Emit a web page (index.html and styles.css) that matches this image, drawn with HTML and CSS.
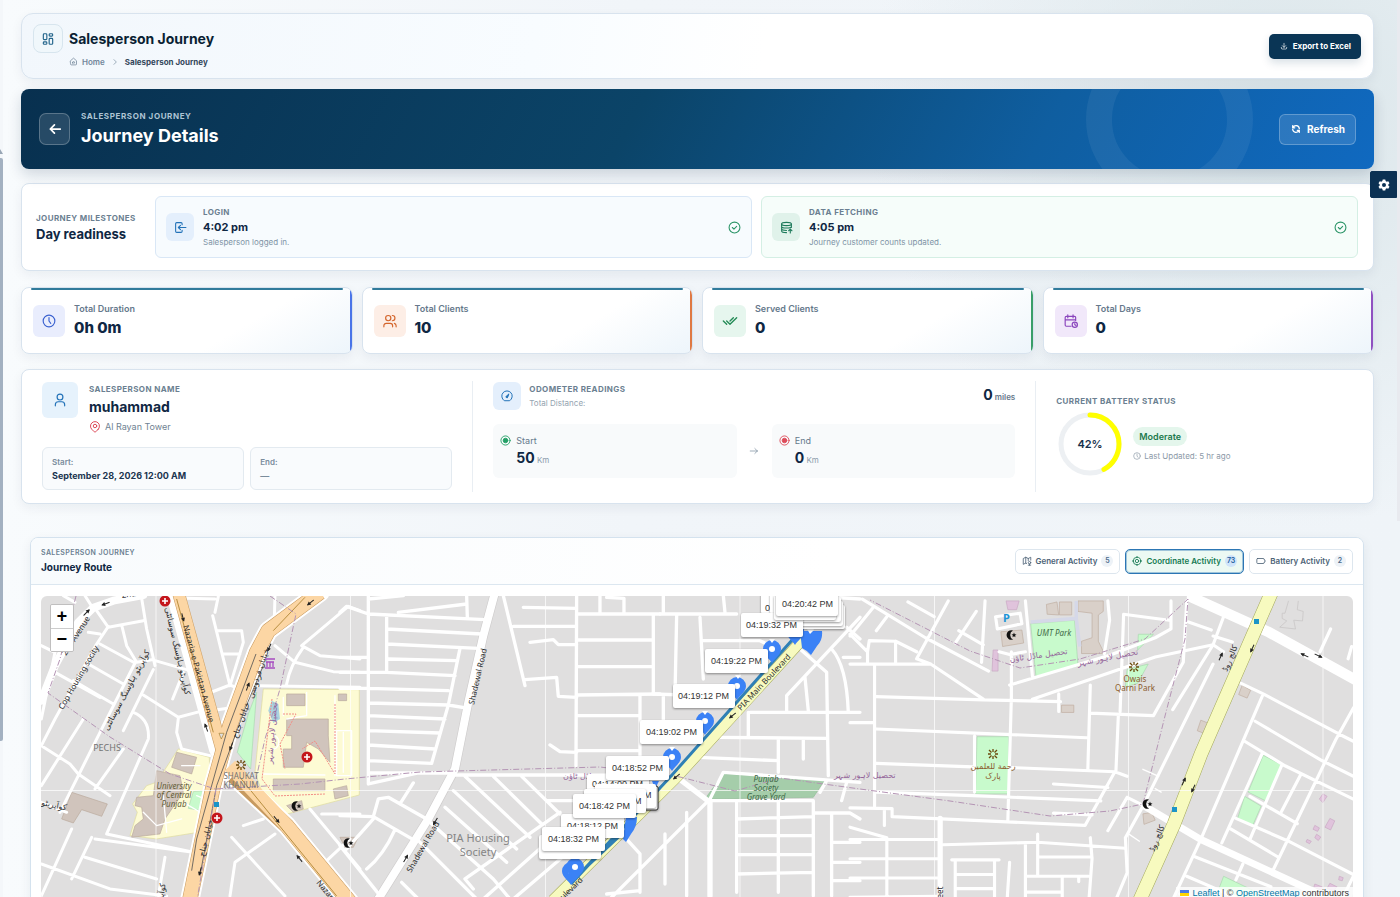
FILE: index.html
```html
<!DOCTYPE html>
<html lang="en">
<head>
<meta charset="utf-8">
<title>Salesperson Journey</title>
<link rel="stylesheet" href="styles.css">
</head>
<body>
<svg class="defs" aria-hidden="true">
  <symbol id="i-dash" viewBox="0 0 24 24"><rect x="4" y="3" width="6" height="10" rx="1.5"/><rect x="4" y="17" width="6" height="4" rx="1.5"/><rect x="14" y="11" width="6" height="10" rx="1.5"/><rect x="14" y="3" width="6" height="4" rx="1.5"/></symbol>
  <symbol id="i-home" viewBox="0 0 24 24"><path d="M4 10l8-7 8 7v9a2 2 0 0 1-2 2H6a2 2 0 0 1-2-2zM9 15a3 3 0 1 1 6 0v1H9z"/></symbol>
  <symbol id="i-chev" viewBox="0 0 24 24"><path d="M9 5l7 7-7 7"/></symbol>
  <symbol id="i-down" viewBox="0 0 24 24"><path d="M4 16v2a3 3 0 0 0 3 3h10a3 3 0 0 0 3-3v-2M7 11l5 5 5-5M12 4v12"/></symbol>
  <symbol id="i-left" viewBox="0 0 24 24"><path d="M4 12h17M4 12l7 7M4 12l7-7"/></symbol>
  <symbol id="i-right" viewBox="0 0 24 24"><path d="M3 12h17M20 12l-6 6M20 12l-6-6"/></symbol>
  <symbol id="i-refresh" viewBox="0 0 24 24"><path d="M20 11A8.1 8.1 0 0 0 4.500 9M4 4v5h5M4 13a8.100 8.100 0 0 0 15.500 2M20 20v-5h-5"/></symbol>
  <symbol id="i-login" viewBox="0 0 24 24"><path d="M15 7V5a2 2 0 0 0-2-2H5a2 2 0 0 0-2 2v14a2 2 0 0 0 2 2h8a2 2 0 0 0 2-2v-2M22 12H8M12 8l-4 4 4 4"/></symbol>
  <symbol id="i-db" viewBox="0 0 24 24"><ellipse cx="12" cy="5.500" rx="9" ry="3"/><path d="M3 5.500v13c0 1.500 4 3 9 3M21 5.500V12M3 10c0 2 4 3 9 3s9-1 9-3M3 14.500c0 2 4 3 9 3M19 22v-7M16 18l3-3 3 3"/></symbol>
  <symbol id="i-check" viewBox="0 0 24 24"><circle cx="12" cy="12" r="10"/><path d="M8 12l3 3 5-5"/></symbol>
  <symbol id="i-clock" viewBox="0 0 24 24"><circle cx="12" cy="12" r="10"/><path d="M12 6v6l3 4"/></symbol>
  <symbol id="i-users" viewBox="0 0 24 24"><circle cx="9" cy="7" r="4.500"/><path d="M1.500 22v-2a4 4 0 0 1 4-4h7a4 4 0 0 1 4 4v2M16 2.500a4.500 4.500 0 0 1 0 9M22.500 22v-2a4.500 4.500 0 0 0-3-4"/></symbol>
  <symbol id="i-checks" viewBox="0 0 24 24"><path d="M7 12l5 5L22 7M2 12l5 5M12 12l5-5"/></symbol>
  <symbol id="i-cal" viewBox="0 0 24 24"><path d="M12 21H4a2 2 0 0 1-2-2V6a2 2 0 0 1 2-2h14a2 2 0 0 1 2 2v5M15.500 1.500v5M6.500 1.500v5M2 10h18"/><circle cx="18.500" cy="18.500" r="4.500"/><path d="M18.500 16.500v2l2 1"/></symbol>
  <symbol id="i-user" viewBox="0 0 24 24"><circle cx="12" cy="7" r="5"/><path d="M4 22v-2a5 5 0 0 1 5-5h6a5 5 0 0 1 5 5v2"/></symbol>
  <symbol id="i-pin" viewBox="0 0 24 24"><circle cx="12" cy="10" r="3.500"/><path d="M18.500 16.500L13.500 21.500a2 2 0 0 1-3 0L5.500 16.500a9 9 0 1 1 13 0z"/></symbol>
  <symbol id="i-gauge" viewBox="0 0 24 24"><path d="M6 21a10.500 10.500 0 1 1 12 0z"/><path d="M15.500 8.500L13.500 14a1.800 1.800 0 1 1-2.500-2z" fill="currentColor"/></symbol>
  <symbol id="i-dot" viewBox="0 0 24 24"><circle cx="12" cy="12" r="10"/><circle cx="12" cy="12" r="5" fill="currentColor"/></symbol>
  <symbol id="i-map" viewBox="0 0 24 24"><path d="M11 18l-2-1-6 3V6l6-3 6 3 6-3v7M9 3v14M15 6v5"/><circle cx="18" cy="16" r="3"/><path d="M18 19v3M15 22h6"/></symbol>
  <symbol id="i-target" viewBox="0 0 24 24"><circle cx="12" cy="12" r="9"/><circle cx="12" cy="12" r="4"/><path d="M12 1v3M12 20v3M1 12h3M20 12h3"/></symbol>
  <symbol id="i-batt" viewBox="0 0 24 24"><path d="M4 6h13a3 3 0 0 1 3 3v.5h1.500v5H20v.5a3 3 0 0 1-3 3H4a2 2 0 0 1-2-2V8a2 2 0 0 1 2-2z"/></symbol>
  <symbol id="i-gear" viewBox="0 0 24 24"><path fill="currentColor" stroke="none" fill-rule="evenodd" d="M9.500 1h5l.8 3.200 2 1.100 3.200-1 2.500 4.300-2.400 2.300v2.200l2.400 2.300-2.500 4.300-3.200-1-2 1.100-.8 3.200h-5l-.8-3.200-2-1.100-3.200 1L1 15.400l2.400-2.300v-2.200L1 8.600l2.500-4.300 3.200 1 2-1.100zM12 8a4 4 0 1 0 0 8 4 4 0 0 0 0-8z"/></symbol>
  <symbol id="m-pin" viewBox="-10 -24 20 26" overflow="visible"><path fill="#3b82f6" d="M0 0C-2-4-9-8-9-14a9 9 0 1 1 18 0C9-8 2-4 0 0z"/><circle cy="-14" r="3" fill="#fff"/></symbol>
  <symbol id="m-med" viewBox="-6 -6 12 12"><circle r="5.500" fill="#c4161c"/><path d="M-3 0h6M0-3v6" stroke="#fff" stroke-width="1.600"/></symbol>
  <symbol id="m-moon" viewBox="-6 -6 12 12"><path fill="#111" d="M2-4.500a4.800 4.800 0 1 0 0 9 5 5 0 0 1 0-9z"/><path fill="#111" d="M3-2.500l.7 1.700 1.800.2-1.400 1.100.4 1.800L3 1.300 1.500 2.300l.4-1.800L.5-.6l1.800-.2z"/></symbol>
  <symbol id="m-park" viewBox="-6 -6 12 12"><path d="M0-5v3M0 5V2M-5-.0h3M5 0H2M-4-4l2.500 2.500M4-4L1.500-1.500M-4 4l2.500-2.500M4 4L1.500 1.500" stroke="#6b4a0c" stroke-width="1.300" fill="none"/></symbol>
  <symbol id="m-arrow" viewBox="-5 -3 10 6"><path d="M-5 0H3" stroke="#222" stroke-width="1"/><path d="M4 0L0-2v4z" fill="#222"/></symbol>
</svg>

<div class="side-scroll"><i class="up"></i><i class="thumb"></i></div>
<main class="page">
  <header class="card top">
    <span class="tile tile-top"><svg class="ic s14"><use href="#i-dash"/></svg></span>
    <div class="top-text">
      <h1>Salesperson Journey</h1>
      <nav class="crumbs"><a href="#"><svg class="ic s9"><use href="#i-home"/></svg>Home</a><svg class="ic s8"><use href="#i-chev"/></svg><span>Salesperson Journey</span></nav>
    </div>
    <button class="export" type="button"><svg class="ic s8"><use href="#i-down"/></svg>Export to Excel</button>
  </header>

  <section class="hero">
    <button class="back" type="button" aria-label="Back"><svg class="ic s14"><use href="#i-left"/></svg></button>
    <div class="hero-text"><p>SALESPERSON JOURNEY</p><h2>Journey Details</h2></div>
    <button class="refresh" type="button"><svg class="ic s10"><use href="#i-refresh"/></svg>Refresh</button>
  </section>

  <section class="card miles">
    <div class="miles-head"><p class="eyebrow">JOURNEY MILESTONES</p><h3>Day readiness</h3></div>
    <article class="mile blue">
      <span class="tile t28"><svg class="ic s13"><use href="#i-login"/></svg></span>
      <div><p class="eyebrow">LOGIN</p><strong>4:02 pm</strong><small>Salesperson logged in.</small></div>
      <svg class="ic s13 ok"><use href="#i-check"/></svg>
    </article>
    <article class="mile green">
      <span class="tile t28"><svg class="ic s13"><use href="#i-db"/></svg></span>
      <div><p class="eyebrow">DATA FETCHING</p><strong>4:05 pm</strong><small>Journey customer counts updated.</small></div>
      <svg class="ic s13 ok"><use href="#i-check"/></svg>
    </article>
  </section>

  <section class="stats">
    <article class="card stat indigo"><span class="tile t32"><svg class="ic s14"><use href="#i-clock"/></svg></span><div><p>Total Duration</p><strong>0h 0m</strong></div></article>
    <article class="card stat orange"><span class="tile t32"><svg class="ic s14"><use href="#i-users"/></svg></span><div><p>Total Clients</p><strong>10</strong></div></article>
    <article class="card stat emerald"><span class="tile t32"><svg class="ic s16"><use href="#i-checks"/></svg></span><div><p>Served Clients</p><strong>0</strong></div></article>
    <article class="card stat purple"><span class="tile t32"><svg class="ic s14"><use href="#i-cal"/></svg></span><div><p>Total Days</p><strong>0</strong></div></article>
  </section>

  <section class="card info">
    <div class="col person">
      <div class="who">
        <span class="tile t36"><svg class="ic s14"><use href="#i-user"/></svg></span>
        <div><p class="eyebrow">SALESPERSON NAME</p><h3>muhammad</h3><p class="place"><svg class="ic s12"><use href="#i-pin"/></svg>Al Rayan Tower</p></div>
      </div>
      <div class="dates">
        <div><span>Start:</span><strong>September 28, 2026 12:00 AM</strong></div>
        <div><span>End:</span><strong class="none">—</strong></div>
      </div>
    </div>
    <div class="col odo">
      <div class="odo-head">
        <span class="tile t28 blue-tile"><svg class="ic s12"><use href="#i-gauge"/></svg></span>
        <div><p class="eyebrow">ODOMETER READINGS</p><small>Total Distance:</small></div>
        <p class="dist"><b>0</b> miles</p>
      </div>
      <div class="reads">
        <div class="read"><svg class="ic s11 go"><use href="#i-dot"/></svg><div><span>Start</span><p><b>50</b> Km</p></div></div>
        <svg class="ic s10 to"><use href="#i-right"/></svg>
        <div class="read"><svg class="ic s11 stop"><use href="#i-dot"/></svg><div><span>End</span><p><b>0</b> Km</p></div></div>
      </div>
    </div>
    <div class="col batt">
      <p class="eyebrow">CURRENT BATTERY STATUS</p>
      <div class="batt-row">
        <svg class="ring" viewBox="0 0 68 68" role="img" aria-label="42%"><circle cx="34" cy="34" r="29" fill="none" stroke="#edf0f3" stroke-width="5"/><circle cx="34" cy="34" r="29" fill="none" stroke="#ffff00" stroke-width="5" stroke-linecap="round" pathLength="100" stroke-dasharray="42 100" transform="rotate(-90 34 34)"/><text x="34" y="38" text-anchor="middle">42%</text></svg>
        <div><span class="pill">Moderate</span><p class="upd"><svg class="ic s8"><use href="#i-clock"/></svg>Last Updated: 5 hr ago</p></div>
      </div>
    </div>
  </section>

  <section class="route">
    <div class="route-head">
      <div><p class="eyebrow">SALESPERSON JOURNEY</p><h3>Journey Route</h3></div>
      <div class="tabs">
        <button type="button"><svg class="ic s10"><use href="#i-map"/></svg>General Activity<i>5</i></button>
        <button type="button" class="on"><svg class="ic s10"><use href="#i-target"/></svg>Coordinate Activity<i>73</i></button>
        <button type="button"><svg class="ic s10"><use href="#i-batt"/></svg>Battery Activity<i>2</i></button>
      </div>
    </div>
    <div class="map">
      <svg class="map-art" viewBox="41 597 1312 304" preserveAspectRatio="xMidYMid slice">
        <rect x="41" y="597" width="1312" height="304" fill="#e0dfdf"/>
        <!-- landuse -->
        <g stroke-width="2">
          <path transform="translate(0 520) scale(.3333)" fill="#fdfbd4" stroke="#e0dc9c" d="M790 510L1078 512V828L850 888L790 830L765 760zM535 690L628 715L632 850L595 940L470 960L390 950L412 880L398 855L440 800L470 790z"/>
          <path transform="translate(0 520) scale(.3333)" fill="#c8facc" stroke="#aad8b0" d="M770 520L752 750L712 700L745 585zM580 818L615 815L605 875L565 868z"/>
          <path transform="translate(0 520) scale(.3333)" fill="#d0c4bc" stroke="#b9a99c" d="M215 820L322 855L305 892L245 872L220 912L185 900zM530 700L590 715L575 765L515 745zM470 755L540 770L550 820L495 900L480 945L395 955L405 920L430 900L425 865L405 860L410 835L460 830zM860 600L985 600V650L990 730L955 690L920 670L910 745H850V690H875V650H860zM860 525H915V560H860zM820 780H975V815H820zM1015 525H1040V545H1015zM1040 800L1000 810L1005 840L1045 830zM860 860L905 845L910 870L880 880zM1020 955L1075 955L1060 985L1035 985z"/>
          <path transform="translate(0 520) scale(.3333)" fill="#aad3df" d="M815 545L835 555L840 600L820 612L805 575z"/>
          <path transform="translate(530 590) scale(.3333)" fill="#a5cdaa" stroke="#8fbd96" d="M580 555L885 572L850 625L525 630z"/>
          <g transform="translate(850 530) scale(.3508)">
            <path fill="#c8facc" stroke="#aad8b0" d="M515 270L640 260L650 390L530 420zM362 592H452V755H358zM1178 645L1230 672L1185 775L1135 750zM1125 762L1172 790L1148 845L1105 825zM1065 990L1180 1045L1170 1075L1050 1030zM822 300H865L820 345zM790 400L850 385L820 440L785 450z"/>
            <path fill="#d9d0c9" stroke="#c0afa2" d="M650 205L722 205V235L708 245V320L725 355H660V320L690 310V240L650 235zM560 215L590 208L595 245L562 243zM597 208H632V245H597zM430 293L490 288L495 325L435 335zM603 502H638V523H603zM1118 445L1142 460L1132 482L1108 472zM1000 545L1025 555L1015 585L990 575zM835 812L860 808L870 830L838 842z"/>
            <path fill="#e0c3dc" stroke="#caa9c4" d="M445 205H482L475 230H450zM408 345H422V405H405zM1348 755L1360 762L1348 780L1338 770zM1368 825L1382 832L1370 858L1354 850zM1325 845L1338 852L1333 862L1320 856zM1330 870L1342 878L1335 888L1325 880zM1303 885L1315 890L1310 897L1300 892zM1325 1012L1350 1022L1345 1030L1322 1022zM1368 1010L1388 1020L1378 1032L1360 1024zM1395 990L1406 994L1403 1003L1393 1000z"/>
            <path fill="none" stroke="#d5d8e8" stroke-width="10" d="M515 265L645 255L655 335M645 205V260"/>
            <path fill="none" stroke="#c5c3c3" d="M1250 205L1240 240H1232V255L1245 262L1225 280L1270 285L1265 260L1290 262L1292 235L1275 230L1278 205"/>
          </g>
        </g>
        <!-- street grid -->
        <g fill="none" stroke="#fff" stroke-linejoin="round" stroke-linecap="round">
          <g transform="translate(0 520) scale(.3333)" stroke-width="9">
            <path d="M255 230L275 262M285 268L325 325L430 305M325 322L290 375L165 600L124 680M190 230L225 250M365 318L380 380L410 430L455 422L570 455M425 238L440 330L465 440M300 375L405 432L300 640L180 880M265 435L370 495M220 485L340 555M165 460L300 535M550 460L518 540M430 528L535 595L610 575M460 452L370 635M535 598L530 640L545 690L630 710M400 580Q450 600 445 660L320 945L580 1000M124 680L210 735L235 765L330 830M250 600L124 800M370 690L285 810M215 930L124 1131M275 955L215 1080M255 1015L470 1080M285 960L580 1000M124 1035L330 1110L500 1131M495 1015L475 1131M124 850L200 880M124 380L165 400L124 600M265 340L300 345"/>
            <path d="M560 238L645 240M655 232L645 280M638 290L690 500M650 335L725 335L730 370L690 500M670 405H720M620 525L690 498L715 508M600 580L715 563M825 230L822 340M905 380L1045 262L1080 275M905 380L960 410L1080 420M825 380L885 430L1000 458L1080 460M910 385Q870 440 860 495M775 500L1080 505M695 955L855 1131M730 920L790 900M690 1131L705 1030L825 945M930 870L1080 1050M965 885H1080M970 1035L1050 960"/>
            <path stroke-width="24" d="M124 545L165 440L200 375L235 310L280 266L340 245L430 228"/>
            <path stroke-width="56" d="M525 220L655 690"/><path stroke-width="58" d="M700 770L860 920L1050 1150"/><path stroke-width="58" d="M960 220L805 335L770 400L690 620L640 800L570 1140"/>
            <path stroke-width="4" d="M1005 530V770M1010 635H1055V770H1010zM1030 640V760M920 520V590L860 600M850 535V590M790 765L975 768M550 850L610 885M430 880L470 920L545 900M490 830L500 940M640 850L590 830M820 650A14 18 0 1 1 822 690M600 740L545 740"/>
          </g>
          <g transform="translate(340 590) scale(.3333)" stroke-width="10">
            <path stroke="#cfcdcd" stroke-width="28" d="M465 10L430 140L385 340L345 540L265 690L115 930"/>
            <path d="M0 70L20 52L85 75V585L235 552H345M85 75L435 92M85 20V75M175 70L380 45M380 20L382 85M85 30L190 20M140 78V250M140 120L425 135M140 165L415 178M145 210L350 215M0 205H85M0 250H140L345 260M0 298H85L325 305M85 342L325 348L385 358M85 380L315 390M85 425L300 432M85 468L285 480M85 515L275 523M360 178L325 348L275 523M85 552H235M0 680L100 683L115 630L145 625L260 690M220 582L180 645M100 683L225 755M165 722Q130 800 80 840M100 690L20 780M0 770L120 920"/>
            <path d="M490 20L555 290M520 112H710M550 55L710 58M570 160L640 152L655 167H710M555 272L650 265L655 322L710 325M710 20L708 530M710 75H960M780 20V75M800 25L852 28V75M710 153H940M940 75V310M710 233H940M710 318L960 315M710 380H900M900 318V500M710 485H900M630 468L660 488L710 490"/>
            <path d="M345 558H800M375 562L570 745M340 605L530 780M315 655L500 820M460 562L605 705M545 562L660 675M620 635H760M660 670L375 870M700 690L430 930M720 760L520 930M270 700L460 870L510 930M235 755L410 930M185 880L235 930M375 870L400 900"/>
            <path stroke-width="24" d="M465 10L430 140L385 340L345 540L265 690L115 930"/>
          </g>
          <g transform="translate(530 590) scale(.3333)" stroke-width="10">
            <path d="M400 20V75M390 75H620M580 20L585 70M440 80L435 320M510 85L520 270M520 155H690L740 180M370 315L520 320M400 320V440M810 180L890 250L895 560M990 85L770 320V365M825 265L835 365M660 370H990M655 370V445M560 445L890 448M505 505L745 515M745 450V550M820 450V510M905 180Q950 230 955 370M940 205H990M950 115L990 150M830 20L990 30"/>
            <path d="M540 630L580 550L990 580M540 635H850V920M530 640L240 930M620 640V910M745 635V910M620 690L850 683M620 740H850M620 797H850M620 855L850 850M850 672H960L990 690M905 672V920M905 760H990M905 820H990M905 875H990M285 745L330 795V910M405 735V885M470 670V920M230 915L330 905M890 575L870 610M950 580L935 635"/>
            <path stroke-width="16" d="M435 560L540 640V920"/>
          </g>
          <g transform="translate(850 530) scale(.3508)" stroke-width="9">
            <path d="M35 200L215 310L395 405M0 305L65 225M0 300L50 350V385M50 350L55 318L130 320V380M130 320L190 350M105 250L75 290M165 208L240 250M280 205L190 370L230 385M385 205L375 380M360 235L300 325M310 290L380 330M500 205L520 420M0 385H230L380 485M70 385V790M75 478L380 487L600 492M460 350V480L450 830M425 350L455 358L500 350M455 445L740 360L870 310L915 285V205M520 485L870 365L1035 330L1065 350M595 470V520M75 570L675 595M75 668L350 678M355 590V750M460 680L755 692L790 705M685 445L678 685M765 530L758 692M685 525L865 532L950 380L960 205M0 552H70M75 750L350 760L715 775M580 727L735 737M755 692L670 845L120 820V797L0 795M98 800V845M580 810L690 815M780 243L910 260M780 243L770 520M735 205L740 260L725 355M415 250L485 240L490 270L420 285z"/>
            <path d="M965 265L1030 288M1065 250L1035 330L920 515M1035 305L1090 322M1035 385L835 790L785 880L790 980L740 1100M790 765L840 790M790 765L735 860M1370 285L1340 350M1430 335L1420 370M1115 440L1178 470L1395 585L1435 605M1178 470L1000 885L900 1100M1435 510L1385 600L1205 975M1155 548L1345 660L1435 705M1125 605L1240 675L1435 770M1175 640L1060 895M1140 762L1275 840M1285 700L1230 805M1230 675L1140 885M1100 825L1250 890L1435 985M1085 855L1220 935M985 935L1200 1020M1120 955L1100 1000M960 990L1100 1050M940 1040L1050 1090M1250 1030L1230 1080M1435 990L1390 1080M1300 1050L1290 1090"/>
            <path stroke-width="4" d="M835 685L880 705M870 740L887 750M795 870L825 890"/>
            <path d="M0 850L105 880V1101M0 885H250M0 940H250M0 995H250M0 1050L250 1047M265 900L535 893L785 910M535 870V990M500 895V1101M540 935H690M500 990H680M685 880L690 940L678 1100M605 990V1101M505 1035H605M652 990V1005M290 943H425M300 943V1101M412 943V1101M300 985H412M300 1025H412M300 1065H412M455 950L445 1101M588 1060V1101"/>
            <path stroke-width="15" d="M257 825V1101"/>
            <path stroke-width="30" d="M975 195L1190 292L1445 432"/><path stroke-width="20" d="M840 790L1000 885L1445 1090"/>
          </g>
        </g>
        <!-- main roads -->
        <g fill="none" stroke-linejoin="round" transform="translate(0 520) scale(.3333)">
          <g stroke="#c79a60"><path stroke-width="38" d="M535 220L665 690"/><path stroke-width="46" d="M700 770L860 920L1050 1150"/><path stroke-width="46" d="M960 220L805 335L770 400L690 620L640 800L570 1140"/></g>
          <g stroke="#fcd6a4"><path stroke-width="35" d="M535 220L665 690"/><path stroke-width="43" d="M690 740L860 920L1050 1150"/><path stroke-width="43" d="M960 220L805 335L770 400L690 620L640 800L570 1140"/></g>
          <path stroke="#555" stroke-width="2.500" d="M768 405L680 640L590 960L575 1055M790 440L735 570L650 800L600 1070"/>
          <path stroke="#a87f2c" stroke-width="2.500" d="M915 235L820 335M720 775L1010 1131M530 240L640 640"/>
          <path fill="#e0dfdf" stroke="#a87f2c" stroke-width="2" d="M657 643H672L664 660z"/>
        </g>
        <g fill="none">
          <path stroke="#a3a85a" stroke-width="11" d="M553 901L677 778L803 640"/><path stroke="#f7fabf" stroke-width="10" d="M553 901L677 778L803 640"/>
          <path stroke="#a3a85a" stroke-width="14" d="M1273 590L1201 755L1174 825L1138 905"/><path stroke="#f7fabf" stroke-width="13" d="M1273 590L1201 755L1174 825L1138 905"/>
        </g>
        <g stroke="#fff" stroke-width="1" opacity=".7"><path d="M156 597V901M350.500 597V901M545.500 597V901M740 597V901M934.500 597V901M1128.500 597V901M1323 597V901M41 791.500H1353"/></g>
        <!-- district boundary and footpaths -->
        <g fill="none" stroke="#b494b4" stroke-width="1" stroke-dasharray="6 2 1 2">
          <path d="M76 597L60 660L48 694L110 738L170 775L215 790L300 785L345 780L420 773L600 768L680 778L735 792L780 779L860 790L950 802L1050 817L1110 812L1143 805L1165 717L1185 640L1188 600L1145 640L1080 660L1020 669L970 652L870 601"/><path d="M270 597L296 615L280 690L265 740L256 780"/><path d="M216 790L197 901"/>
        </g>
        <g fill="none" stroke="#f28d86" stroke-width="1" stroke-dasharray="2 1"><path d="M335 705V775L315 742L302 750M272 700L262 780L275 797L325 795M283 715H296L280 745L285 770"/></g>
        <!-- walking directions -->
        <use href="#m-arrow" x="-5" y="-3" width="10" height="6" transform="translate(87 613) rotate(-45)"/><use href="#m-arrow" x="-5" y="-3" width="10" height="6" transform="translate(105 605) rotate(160)"/><use href="#m-arrow" x="-5" y="-3" width="10" height="6" transform="translate(183 619) rotate(75)"/><use href="#m-arrow" x="-5" y="-3" width="10" height="6" transform="translate(310 604) rotate(140)"/><use href="#m-arrow" x="-5" y="-3" width="10" height="6" transform="translate(269 649) rotate(115)"/><use href="#m-arrow" x="-5" y="-3" width="10" height="6" transform="translate(248 687) rotate(-70)"/><use href="#m-arrow" x="-5" y="-3" width="10" height="6" transform="translate(231 748) rotate(110)"/><use href="#m-arrow" x="-5" y="-3" width="10" height="6" transform="translate(206 728) rotate(250)"/><use href="#m-arrow" x="-5" y="-3" width="10" height="6" transform="translate(200 873) rotate(105)"/><use href="#m-arrow" x="-5" y="-3" width="10" height="6" transform="translate(277 821) rotate(50)"/><use href="#m-arrow" x="-5" y="-3" width="10" height="6" transform="translate(299 859) rotate(230)"/><use href="#m-arrow" x="-5" y="-3" width="10" height="6" transform="translate(435 823) rotate(120)"/><use href="#m-arrow" x="-5" y="-3" width="10" height="6" transform="translate(406 859) rotate(-60)"/><use href="#m-arrow" x="-5" y="-3" width="10" height="6" transform="translate(732 717) rotate(140)"/><use href="#m-arrow" x="-5" y="-3" width="10" height="6" transform="translate(676 778) rotate(140)"/><use href="#m-arrow" x="-5" y="-3" width="10" height="6" transform="translate(1252 650) rotate(115)"/><use href="#m-arrow" x="-5" y="-3" width="10" height="6" transform="translate(1221 657) rotate(-65)"/><use href="#m-arrow" x="-5" y="-3" width="10" height="6" transform="translate(1304 656) rotate(205)"/><use href="#m-arrow" x="-5" y="-3" width="10" height="6" transform="translate(1319 657) rotate(25)"/><use href="#m-arrow" x="-5" y="-3" width="10" height="6" transform="translate(1184 782) rotate(-65)"/><use href="#m-arrow" x="-5" y="-3" width="10" height="6" transform="translate(1193 790) rotate(115)"/>
        <!-- points of interest -->
        <g><use href="#m-med" x="159" y="596" width="12" height="12"/><use href="#m-med" x="301" y="752" width="12" height="12"/><use href="#m-med" x="211" y="813" width="12" height="12"/>
        <use href="#m-moon" x="290" y="801" width="12" height="12"/><use href="#m-moon" x="342" y="838" width="12" height="12"/><use href="#m-moon" x="1005" y="630" width="12" height="12"/><use href="#m-moon" x="1141" y="799" width="12" height="12"/>
        <use href="#m-park" x="235" y="760" width="12" height="12"/><use href="#m-park" x="987" y="749" width="12" height="12"/><use href="#m-park" x="1128" y="662" width="12" height="12"/>
        <path fill="#1b94c7" d="M214 803h5v5h-5zM1254 620h5v5h-5zM1172 808h5v5h-5z"/>
        <path fill="none" stroke="#a64cc0" stroke-width="1.300" d="M265 660h10M266 663h8M267 663v5M270 663v5M273 663v5M265 669h10"/></g>
        <!-- names -->
        <g class="map-text">
          <text transform="translate(183 627) rotate(75)">Nazaria-e-Pakistan Avenue</text>
          <text transform="translate(316 884) rotate(50)">Nazaria-e-Pakistan</text>
          <text transform="translate(63 711) rotate(-60)">Cop Housing socity</text>
          <text transform="translate(66 657) rotate(-57)">2nd Avenue</text>
          <text transform="translate(122 599) rotate(-8)">2nd Ave</text>
          <text transform="translate(474 706) rotate(-77)">Shadewal Road</text>
          <text transform="translate(411 874) rotate(-60)">Shadewal Road</text>
          <text transform="translate(741 712) rotate(-47)">PIA Main Boulevard</text>
          <text transform="translate(556 908) rotate(-44)">Boulevard</text>
          <text transform="translate(943 910) rotate(-90)">Street</text>
          <g class="ar"><text transform="translate(165 609) rotate(77)">کوآپریٹو ہاؤسنگ سوسائٹی</text><text transform="translate(108 732) rotate(-62)">کوآپریٹو ہاؤسنگ سوسائٹی</text><text transform="translate(162 910) rotate(-82)">کوآپریٹو</text><text transform="translate(41 806) rotate(12)">کوآپریٹو</text>
          <text transform="translate(237 740) rotate(-70)">خیابان جناح</text><text transform="translate(253 700) rotate(-72)">خیابان فردوسی</text><text transform="translate(204 858) rotate(-76)">خیابان جناح</text><text transform="translate(1227 673) rotate(-67)">کالج روڈ</text><text transform="translate(1154 853) rotate(-67)">کالج روڈ</text></g>
          <g class="ar plum"><text transform="translate(272 765) rotate(-85)">تحصیل لاہور شہر</text><text x="563" y="780">ماڈل ٹاؤن</text><text transform="translate(1010 663) rotate(-8)">تحصیل ماڈل ٹاؤن</text><text transform="translate(1078 667) rotate(-11)">تحصیل لاہور شہر</text><text transform="translate(834 779)">تحصیل لاہور شہر</text></g>
          <g class="ar brown mid"><text x="993" y="770">رحمة للعلمين</text><text x="993" y="780">پارک</text></g>
          <g class="mid brown"><text x="1135" y="683">Owais</text><text x="1135" y="692">Qarni Park</text></g>
          <g class="mid olive"><text x="174" y="790">University</text><text x="174" y="799">of Central</text><text x="174" y="808">Punjab</text></g>
          <g class="mid grn"><text x="1054" y="637">UMT Park</text><text x="766" y="783">Punjab</text><text x="766" y="792">Society</text><text x="766" y="801">Grave Yard</text></g>
          <g class="mid gray"><text x="241" y="780">SHAUKAT</text><text x="241" y="789">KHANUM</text><text class="m9" x="107" y="752">PECHS</text><text class="m11" x="478" y="843">PIA Housing</text><text class="m11" x="478" y="857">Society</text></g>
          <text class="park-p" x="1003" y="623">P</text>
        </g>
        <!-- tracked route -->
        <path fill="none" stroke="#2f80b5" stroke-width="3" d="M571 885L672 776L793 640M578 876L625 832M575 880L612 840"/>
        <g><use href="#m-pin" x="762" y="640" width="20" height="26"/><use href="#m-pin" x="727" y="677" width="20" height="26"/><use href="#m-pin" x="695" y="712" width="20" height="26"/><use href="#m-pin" x="662" y="748" width="20" height="26"/><use href="#m-pin" x="561" y="862" width="20" height="26"/><use href="#m-pin" x="565" y="858" width="20" height="26"/><use href="#m-pin" x="785" y="622" width="20" height="26"/></g>
        <path fill="#3b82f6" d="M800 632h22q1 9-5 15l-6 9q-3-4-9-7zM626 818h11q0 10-6 17l-5 8-3-3zM652 782h7l-4 8z"/>
        <path fill="#fff" d="M809 623l5 8-4 4-3-5zM769 640h6l-3 4zM735 676h6l-3 4zM702 712h6l-3 4zM669 748h6l-3 4z"/>
        <g class="lbl">
          <rect x="783" y="606" width="62" height="24" rx="2"/><rect x="781" y="602" width="62" height="25" rx="2"/><rect x="779" y="598" width="62" height="25" rx="2"/><rect x="761" y="590" width="62" height="25" rx="2"/><text x="765" y="612">0</text><rect x="770" y="590" width="62" height="25" rx="2"/>
          <rect x="741" y="614" width="62" height="24" rx="2"/><text x="746" y="629">04:19:32 PM</text>
          <rect x="774" y="596" width="62" height="25" rx="2"/><rect x="776" y="593" width="62" height="24" rx="2"/><text x="782" y="608">04:20:42 PM</text>
          <rect x="705" y="650" width="63" height="24" rx="2"/><text x="711" y="665">04:19:22 PM</text>
          <rect x="673" y="685" width="62" height="24" rx="2"/><text x="678" y="700">04:19:12 PM</text>
          <rect x="640" y="721" width="63" height="24" rx="2"/><text x="646" y="736">04:19:02 PM</text>
          <rect class="edge" x="597" y="787" width="61" height="24" rx="2"/><rect x="587" y="775" width="62" height="24" rx="2"/><text x="592" y="788">04:14:00 PM</text><rect x="595" y="785" width="61" height="24" rx="2"/><text x="644" y="799">M</text><rect x="584" y="790" width="62" height="24" rx="2"/><text x="634" y="805">M</text>
          <rect x="606" y="757" width="63" height="24" rx="2"/><text x="612" y="772">04:18:52 PM</text>
          <rect x="561" y="815" width="63" height="24" rx="2"/><text x="567" y="830">04:18:12 PM</text>
          <rect x="573" y="795" width="63" height="24" rx="2"/><text x="579" y="810">04:18:42 PM</text>
          <rect x="539" y="836" width="62" height="24" rx="2"/><rect x="542" y="828" width="63" height="24" rx="2"/><text x="548" y="843">04:18:32 PM</text>
        </g>
      </svg>
      <div class="zoom"><button type="button" aria-label="Zoom in">+</button><button type="button" aria-label="Zoom out">−</button></div>
      <div class="attr"><i></i><a href="#">Leaflet</a> | © <a href="#">OpenStreetMap</a> contributors</div>
    </div>
  </section>
</main>
<button class="gear" type="button" aria-label="Settings"><svg class="ic s12"><use href="#i-gear"/></svg></button>
<div class="page-scroll"></div>
</body>
</html>
```
FILE: styles.css
```css
*, *::before, *::after { box-sizing: border-box; margin: 0; }
body {
  height: 100vh; overflow: hidden; position: relative;
  font-family: Inter, "Liberation Sans", sans-serif; font-size: 8px; line-height: 12px; color: #0f2743;
  background:
    radial-gradient(circle at 92% 12%, #dbe6ea 0, rgba(219,230,234,0) 420px),
    linear-gradient(90deg, #f8fbfd 0, #f1f5f9 45%, #eff4f8 100%);
}
button { font: inherit; color: inherit; border: 0; padding: 0; cursor: pointer; }
a { color: inherit; text-decoration: none; }
.defs { position: absolute; width: 0; height: 0; }
.ic { display: block; flex: none; fill: none; stroke: currentColor; stroke-width: 2; stroke-linecap: round; stroke-linejoin: round; width: 10px; height: 10px; }
.s8 { width: 8px; height: 8px; } .s9 { width: 9px; height: 9px; } .s11 { width: 11px; height: 11px; }
.s12 { width: 12px; height: 12px; } .s13 { width: 13px; height: 13px; } .s14 { width: 14px; height: 14px; } .s16 { width: 16px; height: 16px; }

.side-scroll { position: absolute; left: 0; top: 0; width: 3px; height: 100%; background: #f4f7fa; }
.side-scroll .up { position: absolute; top: 149px; width: 3px; height: 5px; background: #98a6b5; clip-path: polygon(0 0, 100% 100%, 0 100%); }
.side-scroll .thumb { position: absolute; top: 158px; width: 3px; height: 583px; background: #a3b1c1; border-radius: 0 2px 2px 0; }
.page-scroll { position: absolute; right: 0; top: 0; width: 3px; height: 521px; background: #e8eaef; }
.page { padding: 13px 26px 0 21px; display: flex; flex-direction: column; }

.card { background: #fff; border: 1px solid #d8e3ee; border-radius: 8px; box-shadow: 0 4px 12px rgba(15,39,67,.06); }
.tile { display: flex; align-items: center; justify-content: center; flex: none; border-radius: 6px; }
.t28 { width: 28px; height: 28px; } .t32 { width: 32px; height: 32px; } .t36 { width: 36px; height: 36px; }
.eyebrow { font-size: 8px; line-height: 10px; font-weight: 700; letter-spacing: .4px; color: #6b7f91; }

.top { display: flex; align-items: center; height: 66px; padding: 0 12px 0 11px; border-radius: 12px; background: linear-gradient(100deg, #f2f7fc 0, #f8fcff 38%, #fff 55%); }
.tile-top { width: 30px; height: 29px; align-self: flex-start; margin-top: 10px; border: 1px solid #d7e5ee; border-radius: 8px; background: #f0f7fb; color: #24668c; }
.top-text { margin-left: 6px; flex: 1; padding-top: 5px; }
h1 { font-size: 14px; line-height: 18px; font-weight: 700; color: #0a1f33; }
.crumbs { display: flex; align-items: center; gap: 6px; margin-top: 8px; font-size: 8px; line-height: 12px; color: #71869a; }
.crumbs a { display: flex; align-items: center; gap: 4px; font-weight: 600; }
.crumbs span { color: #33475b; font-weight: 700; }
.export { display: flex; align-items: center; gap: 5px; height: 25px; padding: 0 10px 0 11px; border-radius: 5px; background: #0a3555; color: #fff; font-size: 8px; font-weight: 700; box-shadow: 0 4px 8px rgba(10,53,85,.15); }

.hero { position: relative; overflow: hidden; display: flex; align-items: center; height: 80px; margin-top: 10px; padding: 0 18px; border-radius: 8px; color: #fff; background: linear-gradient(118deg, #08304f 0, #0b4468 45%, #0f5ea0 75%, #1069c0 100%); box-shadow: 0 6px 14px rgba(15,39,67,.16); }
.hero::before { content: ""; position: absolute; right: 121px; top: -53px; width: 167px; height: 167px; border: 26px solid rgba(255,255,255,.06); border-radius: 50%; }
.back { display: flex; align-items: center; justify-content: center; width: 31px; height: 32px; border: 1px solid rgba(255,255,255,.24); border-radius: 7px; background: rgba(255,255,255,.12); }
.back .ic { stroke-width: 3; }
.hero-text { flex: 1; margin-left: 11px; }
.hero-text p { font-size: 8px; line-height: 10px; font-weight: 700; letter-spacing: .6px; color: #aec4d4; }
h2 { margin-top: 4px; font-size: 18px; line-height: 22px; font-weight: 700; }
.refresh { position: relative; display: flex; align-items: center; gap: 6px; height: 31px; padding: 0 10px 0 11px; border: 1px solid rgba(255,255,255,.25); border-radius: 6px; background: rgba(255,255,255,.12); font-size: 10px; font-weight: 700; }
.refresh .ic { stroke-width: 3; }

.miles { display: grid; grid-template-columns: 110px 1fr 1fr; gap: 9px; align-items: center; height: 88px; margin-top: 14px; padding: 0 15px 0 14px; }
h3 { font-size: 12px; line-height: 16px; font-weight: 700; color: #0f2743; }
.miles h3 { margin-top: 3px; font-size: 13px; }
.mile { display: flex; align-items: center; gap: 9px; height: 62px; padding: 0 10px; border: 1px solid #d9e7f6; border-radius: 6px; background: #f7fbfe; }
.mile div { flex: 1; }
.mile strong { display: block; margin: 3px 0; font-size: 11px; line-height: 14px; font-weight: 700; }
.mile small { display: block; font-size: 8px; line-height: 10px; color: #8094a6; }
.blue .tile, .blue-tile { background: #e4effc; color: #2272b8; }
.green { background: #f6fdfa; border-color: #d4efe4; }
.green .tile { background: #e0f2ea; color: #1d7a5a; }
.ok { color: #2c9568; }

.stats { display: grid; grid-template-columns: repeat(4, 1fr); gap: 9px; margin-top: 16px; }
.stat { position: relative; overflow: hidden; display: flex; align-items: center; gap: 9px; height: 67px; padding: 0 11px; background: linear-gradient(150deg, #fff 65%, #edf5fb 100%); }
.stat::before { content: ""; position: absolute; top: 0; left: 9px; right: 9px; height: 2px; background: #317b9b; border-radius: 2px; }
.stat::after { content: ""; position: absolute; right: 0; top: 1px; bottom: 1px; width: 2px; background: currentColor; }
.stat p { font-size: 9px; line-height: 11px; font-weight: 600; color: #66798c; }
.stat strong { display: block; margin: 5px 0 2px; font-size: 15px; line-height: 18px; font-weight: 800; color: #0f2743; }
.indigo { color: #4a74e8; } .indigo .tile { background: #e9edfd; color: #3b62d0; }
.orange { color: #df7842; } .orange .tile { background: #fdeee6; color: #d4652c; }
.emerald { color: #3a9e68; } .emerald .tile { background: #e6f6ee; color: #228a55; }
.purple { color: #9050c0; } .purple .tile { background: #f1e8fa; color: #8a45bd; }

.info { display: grid; grid-template-columns: 4fr 5fr 3fr; margin-top: 15px; height: 135px; padding: 11px 0; }
.col { padding: 0 20px; min-width: 0; }
.col + .col { border-left: 1px solid #e9eef3; }
.who { display: flex; gap: 11px; margin-top: 1px; }
.who .tile { background: #e6f2fc; color: #2272b8; }
.who h3 { margin-top: 4px; font-size: 14px; line-height: 18px; }
.who .eyebrow { margin-top: 2px; }
.place { display: flex; align-items: center; gap: 4px; margin-top: 5px; font-size: 9px; color: #6f8292; }
.place .ic { color: #dd4b5a; }
.dates { display: grid; grid-template-columns: 1fr 1fr; gap: 6px; margin-top: 14px; }
.dates div { height: 43px; padding: 8px 9px; border: 1px solid #e3eaf0; border-radius: 6px; background: #f9fbfd; }
.dates span { display: block; line-height: 12px; font-weight: 600; color: #7a8c9c; }
.dates strong { display: block; margin-top: 2px; font-size: 9px; line-height: 12px; font-weight: 700; color: #1b3550; }
.dates .none { color: #7a8c9c; }
.odo-head { display: flex; gap: 8px; margin-top: 1px; align-items: center; }
.odo-head div { flex: 1; }
.odo-head small { display: block; margin-top: 4px; font-size: 8px; line-height: 11px; color: #94a3b0; }
.dist { font-size: 8px; font-weight: 600; color: #66798c; }
.dist b { font-size: 14px; font-weight: 700; color: #0f2743; }
.reads { display: grid; grid-template-columns: 1fr 35px 1fr; align-items: center; margin-top: 14px; }
.to { justify-self: center; color: #8c9cab; }
.read { display: flex; gap: 5px; height: 54px; padding: 11px 7px; border-radius: 6px; background: #f8fafb; }
.read span { display: block; font-size: 9px; line-height: 12px; color: #66798c; }
.read p { font-size: 8px; line-height: 18px; margin-top: 2px; color: #8c9cab; }
.read b { font-size: 14px; font-weight: 700; color: #0f2743; }
.go { color: #23a066; } .stop { color: #dd4b5a; }
.batt .eyebrow { margin-top: 15px; }
.batt-row { display: flex; align-items: center; gap: 9px; margin-top: 4px; }
.ring { width: 68px; height: 68px; }
.ring text { font: 600 11px Inter, sans-serif; fill: #16304b; }
.pill { display: inline-block; padding: 3px 6px; border-radius: 10px; background: #e4f6ec; color: #1c7a4c; font-size: 9px; line-height: 13px; font-weight: 600; }
.upd { display: flex; align-items: center; gap: 3px; margin-top: 4px; color: #8c9aa8; }

.route { margin: 33px 10px 0 9px; border: 1px solid #d4e2ee; border-radius: 8px; background: #fff; box-shadow: 0 4px 12px rgba(15,39,67,.07); overflow: hidden; }
.route-head { display: flex; align-items: center; justify-content: space-between; height: 47px; padding: 0 10px; border-bottom: 1px solid #dce7f0; background: linear-gradient(90deg, #f8fbfd, #fff 60%); }
.route-head .eyebrow { font-size: 7px; font-weight: 600; }
.route-head h3 { margin-top: 1px; font-size: 10px; font-weight: 700; }
.tabs { display: flex; gap: 5px; }
.tabs button { display: flex; align-items: center; gap: 4px; height: 25px; padding: 0 6px; border: 1px solid #dde6ee; border-radius: 5px; background: #fff; font-size: 8px; font-weight: 600; color: #4d6377; }
.tabs i { min-width: 12px; padding: 0 2px; border-radius: 6px; background: #edf2f7; font-style: normal; font-size: 7px; line-height: 12px; color: #4b6a8a; }
.tabs .on { border-color: #2c76b4; background: #ecf9f3; color: #147a52; box-shadow: inset 0 0 0 1px rgba(44,118,180,.4); }
.tabs .on i { background: #cfe4fa; color: #1c5d9c; }

.map { position: relative; margin: 11px 10px; height: 304px; border-radius: 6px; overflow: hidden; }
.map-art { display: block; width: 100%; height: 100%; }
.map-text { font: 8px "Noto Sans", sans-serif; fill: #2c2c2c; }
.map-text .ar { font-family: "DejaVu Sans", sans-serif; }
.map-text .mid { text-anchor: middle; }
.map-text .brown { fill: #8a5a2c; } .map-text .plum { fill: #94659a; } .map-text .gray { fill: #747474; }
.map-text .olive { fill: #65603a; font-style: italic; } .map-text .grn { fill: #3f6b48; font-style: italic; }
.map-text .m9 { font-size: 9px; } .map-text .m11 { font-size: 11px; fill: #858585; }
.map-text .park-p { font: 700 11px "Noto Sans", sans-serif; fill: #1b94d7; }
.lbl { font: 9px "Liberation Sans", Arial, sans-serif; fill: #333; }
.lbl rect { fill: #fff; filter: drop-shadow(0 1px 1px rgba(0,0,0,.4)); }
.lbl .edge { stroke: #333; stroke-width: 1; }
.zoom { position: absolute; left: 9px; top: 8px; width: 24px; border: 1px solid #c0bfbf; border-radius: 2px; overflow: hidden; }
.zoom button { display: block; width: 22px; height: 23px; background: #fff; color: #000; font: 700 18px "Liberation Mono", monospace; line-height: 22px; }
.zoom button + button { border-top: 1px solid #ccc; }
.attr { position: absolute; right: 0; bottom: 0; padding: 0 4px; background: rgba(255,255,255,.8); color: #333; font: 9px "Liberation Sans", Arial, sans-serif; line-height: 13px; }
.attr a { color: #0078a8; text-decoration: underline; }
.attr i { display: inline-block; width: 9px; height: 6px; margin-right: 3px; background: linear-gradient(#4c7be1 50%, #ffd500 50%); }
.gear { position: absolute; right: 3px; top: 171px; display: flex; align-items: center; justify-content: center; width: 27px; height: 27px; background: #0b3153; color: #fff; border: 1px solid #0b3153; border-radius: 2px 0 0 2px; }
```
